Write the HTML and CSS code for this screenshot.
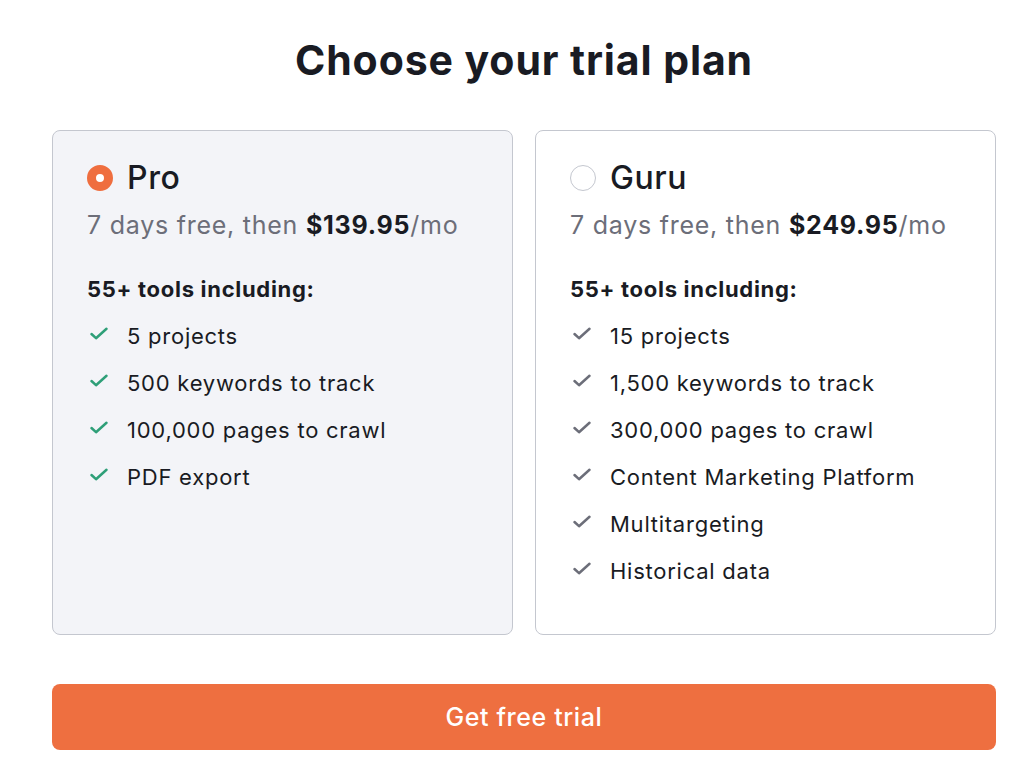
FILE: index.html
```html
<!DOCTYPE html>
<html lang="en">
<head>
<meta charset="utf-8">
<title>Choose your trial plan</title>
<link rel="stylesheet" href="styles.css">
</head>
<body>
<main class="page">
  <h1 class="title">Choose your trial plan</h1>
  <div class="plans">
    <section class="plan plan--selected">
      <div class="plan-head">
        <span class="radio radio--on"></span>
        <span class="plan-name">Pro</span>
      </div>
      <p class="price">7 days free, then <b>$139.95</b>/mo</p>
      <p class="tools">55+ tools including:</p>
      <ul class="features features--green">
        <li><svg class="check" viewBox="0 0 24 24"><path d="M4.5 12l4.5 4.2L19.5 6.8"/></svg>5 projects</li>
        <li><svg class="check" viewBox="0 0 24 24"><path d="M4.5 12l4.5 4.2L19.5 6.8"/></svg>500 keywords to track</li>
        <li><svg class="check" viewBox="0 0 24 24"><path d="M4.5 12l4.5 4.2L19.5 6.8"/></svg>100,000 pages to crawl</li>
        <li><svg class="check" viewBox="0 0 24 24"><path d="M4.5 12l4.5 4.2L19.5 6.8"/></svg>PDF export</li>
      </ul>
    </section>
    <section class="plan">
      <div class="plan-head">
        <span class="radio"></span>
        <span class="plan-name">Guru</span>
      </div>
      <p class="price">7 days free, then <b>$249.95</b>/mo</p>
      <p class="tools">55+ tools including:</p>
      <ul class="features features--gray">
        <li><svg class="check" viewBox="0 0 24 24"><path d="M4.5 12l4.5 4.2L19.5 6.8"/></svg>15 projects</li>
        <li><svg class="check" viewBox="0 0 24 24"><path d="M4.5 12l4.5 4.2L19.5 6.8"/></svg>1,500 keywords to track</li>
        <li><svg class="check" viewBox="0 0 24 24"><path d="M4.5 12l4.5 4.2L19.5 6.8"/></svg>300,000 pages to crawl</li>
        <li><svg class="check" viewBox="0 0 24 24"><path d="M4.5 12l4.5 4.2L19.5 6.8"/></svg>Content Marketing Platform</li>
        <li><svg class="check" viewBox="0 0 24 24"><path d="M4.5 12l4.5 4.2L19.5 6.8"/></svg>Multitargeting</li>
        <li><svg class="check" viewBox="0 0 24 24"><path d="M4.5 12l4.5 4.2L19.5 6.8"/></svg>Historical data</li>
      </ul>
    </section>
  </div>
  <button class="cta" type="button">Get free trial</button>
</main>
</body>
</html>
```

FILE: styles.css
```css
* { box-sizing: border-box; }
html, body {
  margin: 0;
  padding: 0;
  background: #ffffff;
}
body {
  font-family: Inter, "Noto Sans", "Liberation Sans", sans-serif;
  color: #191b23;
}
.page {
  padding: 35px 28px 0 52px;
}
.title {
  margin: 0 0 45px;
  text-align: center;
  font-size: 41px;
  line-height: 50px;
  font-weight: 700;
  letter-spacing: 0.9px;
  color: #191b23;
}
.plans {
  display: grid;
  grid-template-columns: 1fr 1fr;
  gap: 22px;
}
.plan {
  border: 1px solid #c4c7cf;
  border-radius: 8px;
  background: #ffffff;
  padding: 27px 30px 40px 34px;
}
.plan--selected {
  background: #f3f4f8;
}
.plan-head {
  display: flex;
  align-items: center;
  gap: 14px;
  height: 40px;
}
.radio {
  width: 26px;
  height: 26px;
  border-radius: 50%;
  border: 1px solid #c4c7cf;
  background: #ffffff;
  flex: none;
}
.radio--on {
  border: 9px solid #ef6e3f;
  background: #ffffff;
}
.plan-name {
  font-size: 32px;
  font-weight: 500;
  line-height: 40px;
  letter-spacing: 0.6px;
}
.price {
  margin: 11px 0 0;
  font-size: 25px;
  line-height: 32px;
  letter-spacing: 0.75px;
  color: #6c6e79;
}
.price b {
  font-weight: 700;
  color: #191b23;
}
.tools {
  margin: 34px 0 0;
  font-size: 22px;
  line-height: 28px;
  font-weight: 700;
  letter-spacing: 0.7px;
}
.features {
  list-style: none;
  margin: 9px 0 0;
  padding: 0;
}
.features li {
  display: flex;
  align-items: center;
  height: 47px;
  font-size: 22px;
  letter-spacing: 0.75px;
}
.check {
  width: 24px;
  height: 24px;
  margin: -3px 16px 0 0;
  flex: none;
  fill: none;
  stroke-width: 2.5;
  stroke-linecap: round;
  stroke-linejoin: round;
}
.features--green .check { stroke: #2e9f78; }
.features--gray .check { stroke: #6c6e79; }
.cta {
  display: block;
  width: 100%;
  height: 66px;
  margin-top: 49px;
  border: none;
  border-radius: 8px;
  background: #ee6f40;
  color: #ffffff;
  font-family: Inter, "Noto Sans", "Liberation Sans", sans-serif;
  font-size: 25px;
  font-weight: 500;
  letter-spacing: 0.6px;
}
```
